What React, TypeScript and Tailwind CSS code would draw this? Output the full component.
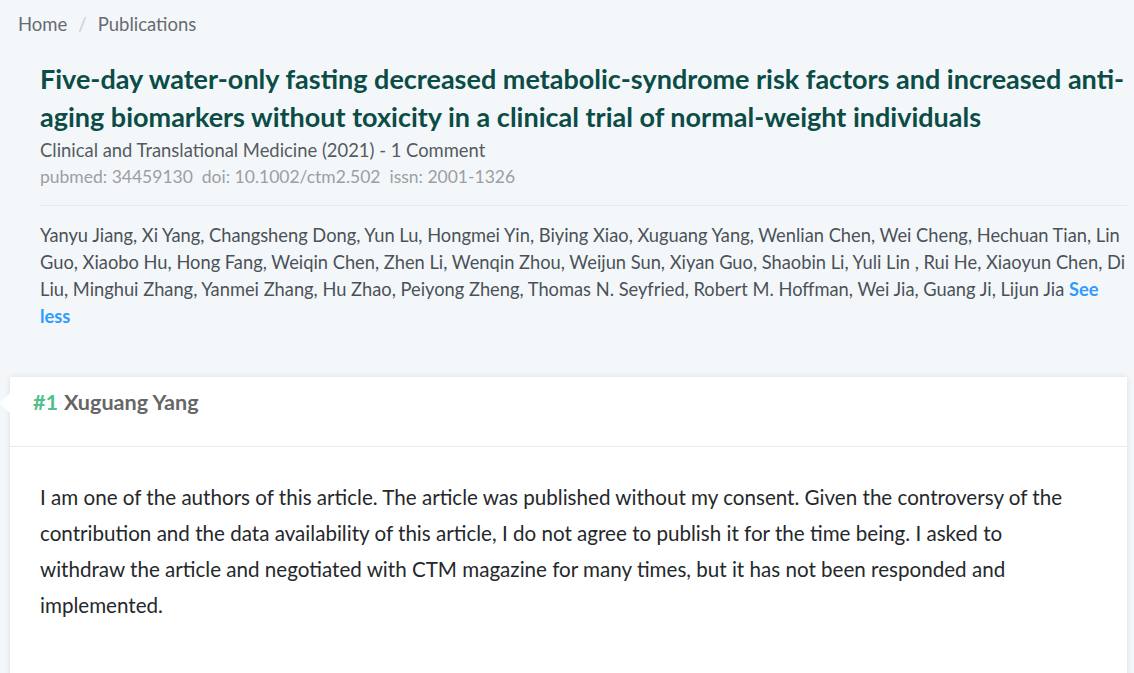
export default function App() {
  const authorLines = [
    'Yanyu Jiang, Xi Yang, Changsheng Dong, Yun Lu, Hongmei Yin, Biying Xiao, Xuguang Yang, Wenlian Chen, Wei Cheng, Hechuan Tian, Lin',
    'Guo, Xiaobo Hu, Hong Fang, Weiqin Chen, Zhen Li, Wenqin Zhou, Weijun Sun, Xiyan Guo, Shaobin Li, Yuli Lin , Rui He, Xiaoyun Chen, Di',
  ]
  const commentLines = [
    'I am one of the authors of this article. The article was published without my consent. Given the controversy of the',
    'contribution and the data availability of this article, I do not agree to publish it for the time being. I asked to',
    'withdraw the article and negotiated with CTM magazine for many times, but it has not been responded and',
    'implemented.',
  ]

  return (
    <div className="min-h-screen w-full overflow-hidden bg-[#f4f7fa] font-['Lato','Noto_Sans',sans-serif]">
      {/* breadcrumb */}
      <nav className="flex items-center px-[18px] pt-[12px] text-[18.5px] leading-[24px] text-[#666b70]">
        <span>Home</span>
        <span className="mx-[11px] text-[#c8ccd0]">/</span>
        <span>Publications</span>
      </nav>

      {/* article head */}
      <section className="mr-[7px] pl-[40px] pt-[24px]">
        <h1 className="text-[27px] font-bold leading-[38px] text-[#0b4d46]">
          Five-day water-only fasting decreased metabolic-syndrome risk factors and increased anti-aging biomarkers without toxicity in a clinical trial of normal-weight individuals
        </h1>
        <p className="text-[18.4px] leading-[28px] text-[#555b60]">Clinical and Translational Medicine (2021) - 1 Comment</p>
        <p className="text-[17.5px] leading-[26px] text-[#9a9fa4]">
          pubmed: 34459130&nbsp; doi: 10.1002/ctm2.502&nbsp; issn: 2001-1326
        </p>
        <div className="mt-[15px] border-t border-[#e6eaee]" />
        <div className="pt-[16px] text-[18.3px] leading-[27px] text-[#4a5258]">
          {authorLines.map((l) => (
            <div key={l} className="whitespace-nowrap">{l}</div>
          ))}
          <div className="whitespace-nowrap">
            Liu, Minghui Zhang, Yanmei Zhang, Hu Zhao, Peiyong Zheng, Thomas N. Seyfried, Robert M. Hoffman, Wei Jia, Guang Ji, Lijun Jia{' '}
            <span className="cursor-pointer font-bold text-[#2f9bff]">See</span>
          </div>
          <div className="cursor-pointer font-bold text-[#2f9bff]">less</div>
        </div>
      </section>

      {/* comment */}
      <div className="relative mt-[47px] ml-[10px] mr-[7px] bg-white shadow-[0_0_6px_rgba(0,0,0,0.1)]">
        <span className="absolute left-[-10px] top-[16px] h-0 w-0 border-y-[10px] border-r-[10px] border-y-transparent border-r-white" />
        <div className="flex h-[70px] items-start border-b border-[#e8eaec] px-[23px] pt-[12px] text-[21.6px] font-bold leading-[26px]">
          <span className="text-[#52c08c]">#1</span>
          <span className="ml-[6px] text-[#666]">Xuguang Yang</span>
        </div>
        <div className="px-[30px] pt-[32px] pb-[60px] text-[20.6px] leading-[36px] text-[#25282b]">
          {commentLines.map((l) => (
            <div key={l} className="whitespace-nowrap">{l}</div>
          ))}
        </div>
      </div>
    </div>
  )
}
